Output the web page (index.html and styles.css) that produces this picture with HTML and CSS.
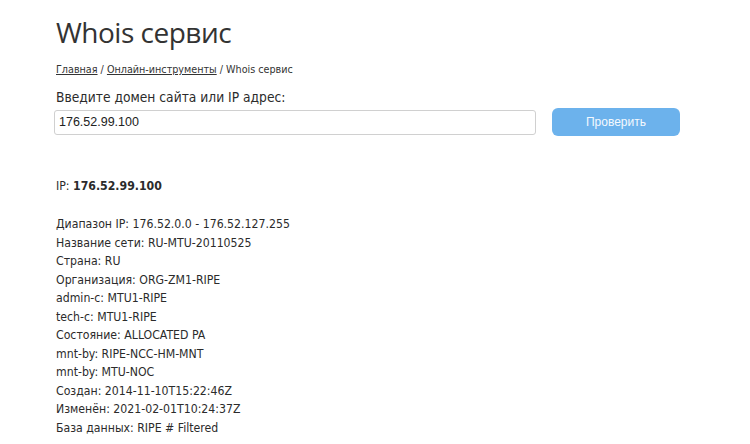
FILE: index.html
```html
<!DOCTYPE html>
<html lang="ru">
<head>
<meta charset="utf-8">
<title>Whois сервис</title>
<link rel="stylesheet" href="styles.css">
</head>
<body>
<main class="page">
  <h1 class="title">Whois сервис</h1>
  <nav class="crumbs"><a href="#">Главная</a> / <a href="#">Онлайн-инструменты</a> / Whois сервис</nav>
  <form class="lookup">
    <label class="lookup-label" for="q">Введите домен сайта или IP адрес:</label>
    <div class="lookup-row">
      <input class="lookup-input" id="q" type="text" value="176.52.99.100">
      <button class="lookup-btn" type="button">Проверить</button>
    </div>
  </form>
  <section class="result">
    <p class="result-ip">IP: <b>176.52.99.100</b></p>
    <div class="result-list">
      <div>Диапазон IP: 176.52.0.0 - 176.52.127.255</div>
      <div>Название сети: RU-MTU-20110525</div>
      <div>Страна: RU</div>
      <div>Организация: ORG-ZM1-RIPE</div>
      <div>admin-c: MTU1-RIPE</div>
      <div>tech-c: MTU1-RIPE</div>
      <div>Состояние: ALLOCATED PA</div>
      <div>mnt-by: RIPE-NCC-HM-MNT</div>
      <div>mnt-by: MTU-NOC</div>
      <div>Создан: 2014-11-10T15:22:46Z</div>
      <div>Изменён: 2021-02-01T10:24:37Z</div>
      <div>База данных: RIPE # Filtered</div>
    </div>
  </section>
</main>
</body>
</html>
```

FILE: styles.css
```css
html, body { margin: 0; padding: 0; background: #fff; }
body {
  font-family: "DejaVu Sans Condensed", "DejaVu Sans", sans-serif;
  font-stretch: condensed;
  color: #2b2b2b;
}
.page { padding: 14px 0 0 56px; width: 626px; }
.title {
  font-family: "Open Sans", sans-serif;
  font-stretch: normal;
  font-weight: 400;
  font-size: 28px;
  letter-spacing: -0.5px;
  line-height: 36px;
  margin: 0;
  color: #333;
}
.crumbs {
  margin-top: 12px;
  font-size: 10.7px;
  line-height: 16px;
  color: #333;
}
.crumbs a { color: #333; }
.lookup { margin-top: 10px; }
.lookup-label {
  display: block;
  font-size: 13.7px;
  line-height: 18px;
  color: #2b2b2b;
}
.lookup-row { display: flex; align-items: center; gap: 16px; margin-top: 2px; height: 28px; }
.lookup-input {
  box-sizing: border-box;
  width: 482px; height: 25px; margin-left: -2px;
  border: 1px solid #d0d0d0; border-radius: 3px;
  padding: 0 4px;
  font-family: "Liberation Sans", sans-serif; font-size: 12.5px; color: #222;
}
.lookup-btn {
  box-sizing: border-box;
  width: 128px; height: 28px;
  border: 0; border-radius: 6px;
  background: #6cb2ec; color: #f4f9fe;
  font-family: "Liberation Sans", sans-serif; font-size: 12px;
}
.result { margin-top: 41px; font-size: 12.2px; line-height: 18.5px; }
.result-ip { margin: 0 0 19.5px; }
.result-list div { white-space: nowrap; }
```
